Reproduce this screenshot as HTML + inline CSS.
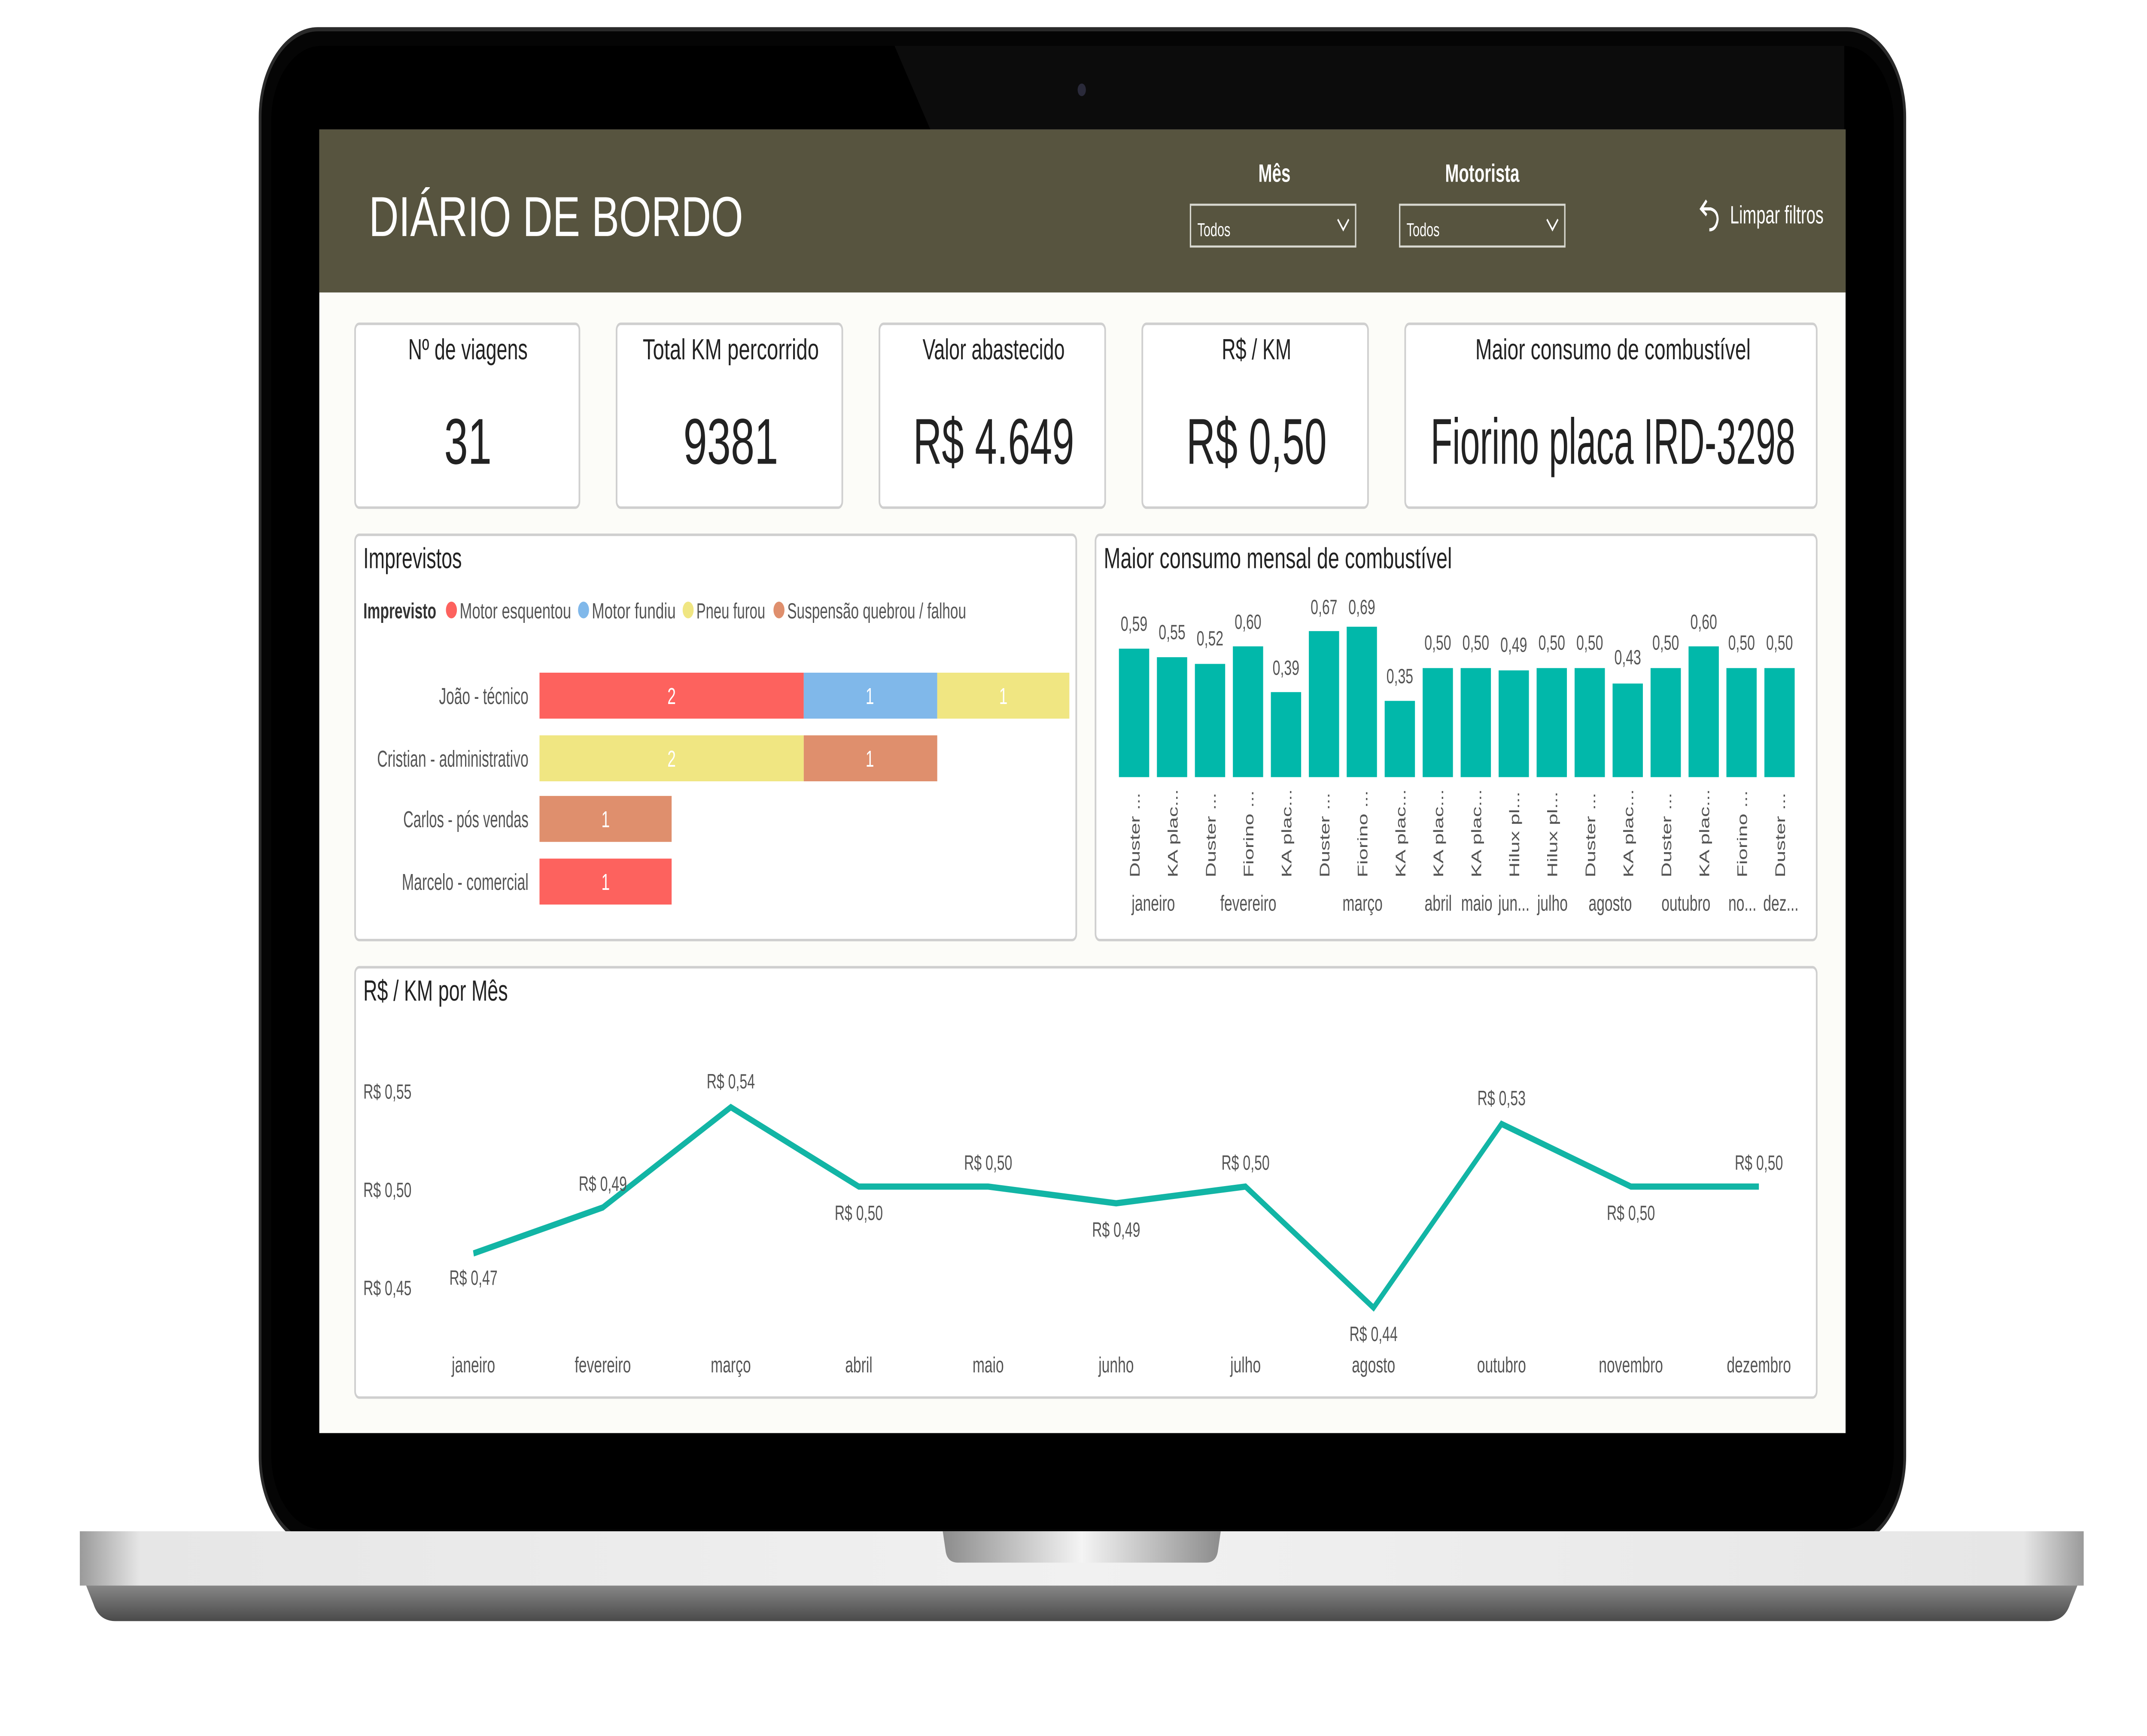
<!DOCTYPE html>
<html><head><meta charset="utf-8"><style>
html,body{margin:0;padding:0;background:#fff;width:100vw;height:100vh;overflow:hidden}
svg{display:block;width:100vw;height:100vh}
text{font-family:"Liberation Sans",sans-serif}
</style></head><body>
<svg viewBox="0 0 1560 831" preserveAspectRatio="none" xmlns="http://www.w3.org/2000/svg">
<defs>
<linearGradient id="baseTop" x1="0" x2="1" y1="0" y2="0">
<stop offset="0" stop-color="#9a9a9a"/><stop offset="0.03" stop-color="#e6e6e6"/><stop offset="0.5" stop-color="#f1f1f1"/><stop offset="0.97" stop-color="#e6e6e6"/><stop offset="1" stop-color="#9a9a9a"/>
</linearGradient>
<linearGradient id="baseBot" x1="0" x2="0" y1="0" y2="1">
<stop offset="0" stop-color="#8a8a8a"/><stop offset="1" stop-color="#4a4a4a"/>
</linearGradient>
<linearGradient id="notch" x1="0" x2="1" y1="0" y2="0">
<stop offset="0" stop-color="#8c8c8c"/><stop offset="0.5" stop-color="#f4f4f4"/><stop offset="1" stop-color="#8c8c8c"/>
</linearGradient>
</defs>
<rect width="1560" height="831" fill="#fff"/>
<rect x="189" y="14" width="1195" height="725" rx="42" fill="#050505" stroke="#2a2a2a" stroke-width="2"/>
<rect x="197" y="22" width="1179" height="710" rx="36" fill="#000"/>
<polygon points="650,22 1340,22 1340,62 676,62" fill="#0c0c0c"/>
<circle cx="786" cy="43" r="3" fill="#2a2a3a"/>
<rect x="232" y="62" width="1109" height="624" fill="#fcfcf8"/>
<rect x="232" y="62" width="1109" height="78" fill="#57543f"/>
<text x="268" y="113" font-size="27" fill="#fff" textLength="272" lengthAdjust="spacingAndGlyphs">DIÁRIO DE BORDO</text>
<text x="926" y="87" font-size="12" font-weight="bold" fill="#fff" text-anchor="middle">Mês</text>
<text x="1077" y="87" font-size="12" font-weight="bold" fill="#fff" text-anchor="middle">Motorista</text>
<rect x="865" y="98" width="120" height="20" fill="none" stroke="#d8d8d0" stroke-width="1"/>
<text x="870" y="113" font-size="9" fill="#fff">Todos</text>
<path d="M972 105 L976 110 L980 105" fill="none" stroke="#fff" stroke-width="1"/>
<rect x="1017" y="98" width="120" height="20" fill="none" stroke="#d8d8d0" stroke-width="1"/>
<text x="1022" y="113" font-size="9" fill="#fff">Todos</text>
<path d="M1124 105 L1128 110 L1132 105" fill="none" stroke="#fff" stroke-width="1"/>
<path d="M1240 96 L1236 100 L1240 103 M1236 100 L1243 100 Q1248 101 1248 105 Q1247 110 1242 110" fill="none" stroke="#fff" stroke-width="1.5"/>
<text x="1257" y="107" font-size="12" fill="#fff" textLength="68" lengthAdjust="spacingAndGlyphs">Limpar filtros</text>

<g fill="#fff" stroke="#cfcfcf" stroke-width="1.2">
<rect x="258" y="155" width="163" height="88" rx="3"/>
<rect x="448" y="155" width="164" height="88" rx="3"/>
<rect x="639" y="155" width="164" height="88" rx="3"/>
<rect x="830" y="155" width="164" height="88" rx="3"/>
<rect x="1021" y="155" width="299" height="88" rx="3"/>
<rect x="258" y="256" width="524" height="194" rx="3"/>
<rect x="796" y="256" width="524" height="194" rx="3"/>
<rect x="258" y="463" width="1062" height="206" rx="3"/>
</g>
<g font-size="14" fill="#222" text-anchor="middle">
<text x="340" y="172">Nº de viagens</text>
<text x="531" y="172" textLength="128" lengthAdjust="spacingAndGlyphs">Total KM percorrido</text>
<text x="722" y="172">Valor abastecido</text>
<text x="913" y="172">R$ / KM</text>
<text x="1172" y="172" textLength="200" lengthAdjust="spacingAndGlyphs">Maior consumo de combustível</text>
</g>
<g font-size="31" fill="#222" text-anchor="middle">
<text x="340" y="222">31</text>
<text x="531" y="222">9381</text>
<text x="722" y="222" textLength="117" lengthAdjust="spacingAndGlyphs">R$ 4.649</text>
<text x="913" y="222" textLength="102" lengthAdjust="spacingAndGlyphs">R$ 0,50</text>
<text x="1172" y="222" textLength="265" lengthAdjust="spacingAndGlyphs">Fiorino placa IRD-3298</text>
</g>

<text x="264" y="272" font-size="14" fill="#222">Imprevistos</text>
<g font-size="10.5" fill="#555">
<text x="264" y="296" font-weight="bold" fill="#333" textLength="53" lengthAdjust="spacingAndGlyphs">Imprevisto</text>
<circle cx="328" cy="292" r="4" fill="#fd625e"/><text x="334" y="296" textLength="81" lengthAdjust="spacingAndGlyphs">Motor esquentou</text>
<circle cx="424" cy="292" r="4" fill="#80b8ea"/><text x="430" y="296" textLength="61" lengthAdjust="spacingAndGlyphs">Motor fundiu</text>
<circle cx="500" cy="292" r="4" fill="#f0e682"/><text x="506" y="296" textLength="50" lengthAdjust="spacingAndGlyphs">Pneu furou</text>
<circle cx="566" cy="292" r="4" fill="#df8f6d"/><text x="572" y="296" textLength="130" lengthAdjust="spacingAndGlyphs">Suspensão quebrou / falhou</text>
</g>
<g font-size="11" fill="#555" text-anchor="end">
<text x="384" y="337" textLength="65" lengthAdjust="spacingAndGlyphs">João - técnico</text>
<text x="384" y="367" textLength="110" lengthAdjust="spacingAndGlyphs">Cristian - administrativo</text>
<text x="384" y="396" textLength="91" lengthAdjust="spacingAndGlyphs">Carlos - pós vendas</text>
<text x="384" y="426" textLength="92" lengthAdjust="spacingAndGlyphs">Marcelo - comercial</text>
</g>
<rect x="392" y="322" width="192" height="22" fill="#fd625e"/>
<rect x="584" y="322" width="97" height="22" fill="#80b8ea"/>
<rect x="681" y="322" width="96" height="22" fill="#f0e682"/>
<rect x="392" y="352" width="192" height="22" fill="#f0e682"/>
<rect x="584" y="352" width="97" height="22" fill="#df8f6d"/>
<rect x="392" y="381" width="96" height="22" fill="#df8f6d"/>
<rect x="392" y="411" width="96" height="22" fill="#fd625e"/>
<g font-size="11" fill="#fff" text-anchor="middle">
<text x="488" y="337">2</text><text x="632" y="337">1</text><text x="729" y="337">1</text>
<text x="488" y="367">2</text><text x="632" y="367">1</text>
<text x="440" y="396">1</text><text x="440" y="426">1</text>
</g>

<text x="802" y="272" font-size="14" fill="#222" textLength="253" lengthAdjust="spacingAndGlyphs">Maior consumo mensal de combustível</text>
<g fill="#01b8aa">
<rect x="813" y="310.5" width="22" height="61.5"/>
<rect x="840.6" y="314.6" width="22" height="57.4"/>
<rect x="868.2" y="317.8" width="22" height="54.2"/>
<rect x="895.8" y="309.4" width="22" height="62.6"/>
<rect x="923.4" y="331.3" width="22" height="40.7"/>
<rect x="951" y="302.1" width="22" height="69.9"/>
<rect x="978.5" y="300" width="22" height="72"/>
<rect x="1006.1" y="335.5" width="22" height="36.5"/>
<rect x="1033.7" y="319.8" width="22" height="52.2"/>
<rect x="1061.3" y="319.8" width="22" height="52.2"/>
<rect x="1088.9" y="320.9" width="22" height="51.1"/>
<rect x="1116.5" y="319.8" width="22" height="52.2"/>
<rect x="1144.1" y="319.8" width="22" height="52.2"/>
<rect x="1171.7" y="327.2" width="22" height="44.8"/>
<rect x="1199.3" y="319.8" width="22" height="52.2"/>
<rect x="1226.9" y="309.4" width="22" height="62.6"/>
<rect x="1254.4" y="319.8" width="22" height="52.2"/>
<rect x="1282" y="319.8" width="22" height="52.2"/>
</g>
<g font-size="10" fill="#555" text-anchor="middle">
<text x="824" y="302">0,59</text><text x="851.6" y="306">0,55</text><text x="879.2" y="309">0,52</text>
<text x="906.8" y="301">0,60</text><text x="934.4" y="323">0,39</text><text x="962" y="294">0,67</text>
<text x="989.5" y="294">0,69</text><text x="1017.1" y="327">0,35</text><text x="1044.7" y="311">0,50</text>
<text x="1072.3" y="311">0,50</text><text x="1099.9" y="312">0,49</text><text x="1127.5" y="311">0,50</text>
<text x="1155.1" y="311">0,50</text><text x="1182.7" y="318">0,43</text><text x="1210.3" y="311">0,50</text>
<text x="1237.9" y="301">0,60</text><text x="1265.4" y="311">0,50</text><text x="1293" y="311">0,50</text>
</g>
<g font-size="10" fill="#555">
<text transform="translate(828,420) rotate(-90)">Duster ...</text>
<text transform="translate(855.6,420) rotate(-90)">KA plac...</text>
<text transform="translate(883.2,420) rotate(-90)">Duster ...</text>
<text transform="translate(910.8,420) rotate(-90)">Fiorino ...</text>
<text transform="translate(938.4,420) rotate(-90)">KA plac...</text>
<text transform="translate(966,420) rotate(-90)">Duster ...</text>
<text transform="translate(993.5,420) rotate(-90)">Fiorino ...</text>
<text transform="translate(1021.1,420) rotate(-90)">KA plac...</text>
<text transform="translate(1048.7,420) rotate(-90)">KA plac...</text>
<text transform="translate(1076.3,420) rotate(-90)">KA plac...</text>
<text transform="translate(1103.9,420) rotate(-90)">Hilux pl...</text>
<text transform="translate(1131.5,420) rotate(-90)">Hilux pl...</text>
<text transform="translate(1159.1,420) rotate(-90)">Duster ...</text>
<text transform="translate(1186.7,420) rotate(-90)">KA plac...</text>
<text transform="translate(1214.3,420) rotate(-90)">Duster ...</text>
<text transform="translate(1241.9,420) rotate(-90)">KA plac...</text>
<text transform="translate(1269.4,420) rotate(-90)">Fiorino ...</text>
<text transform="translate(1297,420) rotate(-90)">Duster ...</text>
</g>
<g font-size="10.5" fill="#555" text-anchor="middle">
<text x="838" y="436">janeiro</text><text x="907" y="436">fevereiro</text><text x="990" y="436">março</text>
<text x="1045" y="436">abril</text><text x="1073" y="436">maio</text><text x="1100" y="436">jun...</text>
<text x="1128" y="436">julho</text><text x="1170" y="436">agosto</text><text x="1225" y="436">outubro</text>
<text x="1266" y="436">no...</text><text x="1294" y="436">dez...</text>
</g>

<text x="264" y="479" font-size="14" fill="#222">R$ / KM por Mês</text>
<g font-size="10" fill="#555">
<text x="264" y="526">R$ 0,55</text><text x="264" y="573">R$ 0,50</text><text x="264" y="620">R$ 0,45</text>
</g>
<polyline points="344,600 438,578 531,530 624,568 718,568 811,576 905,568 998,626 1091,538 1185,568 1278,568" fill="none" stroke="#12b5a5" stroke-width="3"/>
<g font-size="10" fill="#555" text-anchor="middle">
<text x="344" y="615">R$ 0,47</text><text x="438" y="570">R$ 0,49</text><text x="531" y="521">R$ 0,54</text>
<text x="624" y="584">R$ 0,50</text><text x="718" y="560">R$ 0,50</text><text x="811" y="592">R$ 0,49</text>
<text x="905" y="560">R$ 0,50</text><text x="998" y="642">R$ 0,44</text><text x="1091" y="529">R$ 0,53</text>
<text x="1185" y="584">R$ 0,50</text><text x="1278" y="560">R$ 0,50</text>
</g>
<g font-size="10.5" fill="#555" text-anchor="middle">
<text x="344" y="657">janeiro</text><text x="438" y="657">fevereiro</text><text x="531" y="657">março</text>
<text x="624" y="657">abril</text><text x="718" y="657">maio</text><text x="811" y="657">junho</text>
<text x="905" y="657">julho</text><text x="998" y="657">agosto</text><text x="1091" y="657">outubro</text>
<text x="1185" y="657">novembro</text><text x="1278" y="657">dezembro</text>
</g>

<path d="M62 758 L1510 758 L1504 768 Q1500 776 1488 776 L84 776 Q72 776 68 768 Z" fill="url(#baseBot)"/>
<rect x="58" y="733" width="1456" height="26" fill="url(#baseTop)"/>
<path d="M685 733 L887 733 L885 742 Q884 748 876 748 L696 748 Q688 748 687 742 Z" fill="url(#notch)"/>
</svg>
</body></html>
